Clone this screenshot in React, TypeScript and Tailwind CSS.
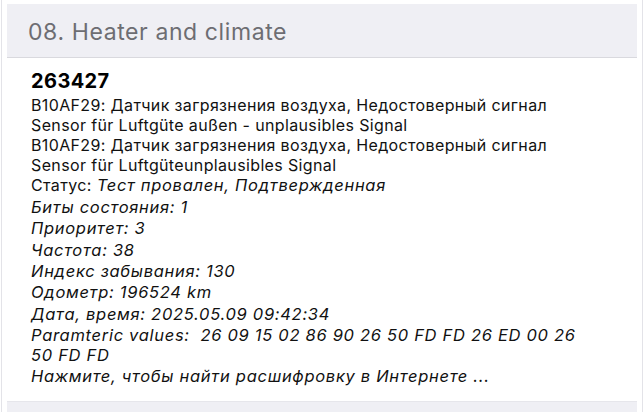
import React from 'react'

const rows = [
  'Биты состояния: 1',
  'Приоритет: 3',
  'Частота: 38',
  'Индекс забывания: 130',
  'Одометр: 196524 km',
  'Дата, время: 2025.05.09 09:42:34',
]

const it = 'italic text-[16.5px] tracking-[0.7px]'

const App = () => {
  return (
    <div className="w-[644px] h-[412px] overflow-hidden bg-white px-[1px] font-['Inter','Liberation_Sans',sans-serif]">
      <div className="h-full border-x border-[#e3e3e8] px-[5px] pt-[4px]">
        {/* Section header */}
        <div className="h-[54px] bg-[#efeff4] border-b border-[#d9d9de] pl-[21px] pt-[15px] text-[23px] tracking-[0.6px] leading-[27px] text-[#6d6d72]">
          08. Heater and climate
        </div>

        {/* Error card */}
        <div className="h-[343px] pl-[24px] pr-[46px] pt-[10.7px] text-[16px] tracking-[0.36px] text-[#111] leading-[20px]">
          <div className="text-[20px] font-bold tracking-[0.4px] leading-[24px] text-black">263427</div>
          <div className="mt-[2.5px]">
            <div>B10AF29: Датчик загрязнения воздуха, Недостоверный сигнал</div>
            <div>Sensor für Luftgüte außen - unplausibles Signal</div>
            <div>B10AF29: Датчик загрязнения воздуха, Недостоверный сигнал</div>
            <div>Sensor für Luftgüteunplausibles Signal</div>
            <div>
              Статус: <span className={it}>Тест провален, Подтвержденная</span>
            </div>
          </div>
          <div className="mt-[2px] leading-[21.3px]">
            {rows.map((r, i) => (
              <div key={i} className={it}>{r}</div>
            ))}
          </div>
          <div className={`${it} mt-[0.5px]`}>
            Paramteric values:&nbsp; 26 09 15 02 86 90 26 50 FD FD 26 ED 00 26 50 FD FD
          </div>
          <div className={`${it} mt-[1px]`}>Нажмите, чтобы найти расшифровку в Интернете ...</div>
        </div>

        {/* Next section header */}
        <div className="h-[12px] bg-[#efeff4] border-t border-[#e6e6eb]"></div>
      </div>
    </div>
  )
}

export default App
